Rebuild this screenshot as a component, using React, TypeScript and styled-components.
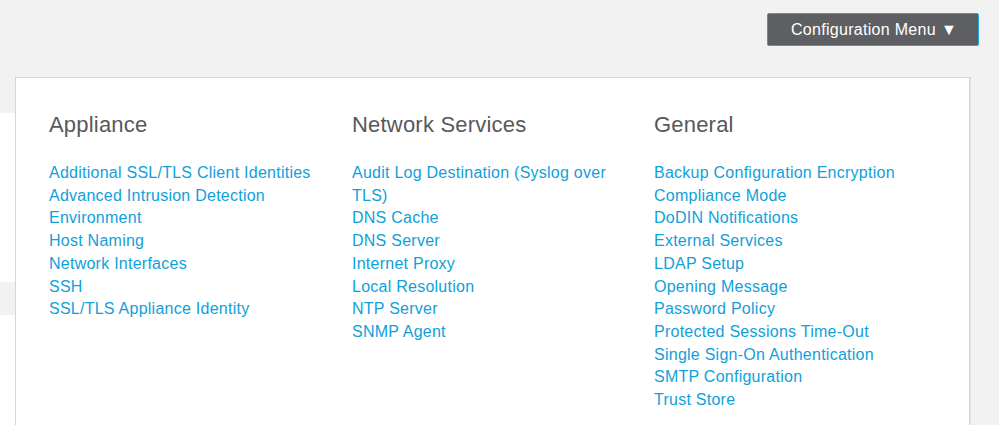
import styled, { createGlobalStyle } from "styled-components";

const GlobalStyle = createGlobalStyle`
    html, body {
        margin: 0;
        padding: 0;
        background: #f2f2f2;
        font-family: "Liberation Sans", Arial, Helvetica, sans-serif;
    }
    #root {
        min-height: 425px;
    }
`;

const Page = styled.div`
    position: relative;
    width: 999px;
    height: 425px;
    overflow: hidden;
    background: #f2f2f2;
`;

const Header = styled.div`
    height: 113px;
    display: flex;
    justify-content: flex-end;
    align-items: flex-start;
    padding: 13px 20px 0 0;
    box-sizing: border-box;
`;

const MenuButton = styled.button`
    height: 33px;
    width: 212px;
    background: #5e5f63;
    color: #ffffff;
    border: 1px solid #23a6e0;
    border-radius: 2px;
    font-family: inherit;
    font-size: 16px;
    letter-spacing: 0.3px;
    display: flex;
    align-items: center;
    justify-content: center;
    gap: 5px;
    padding: 0 0 0 2px;
    cursor: pointer;
`;

const Caret = styled.span`
    font-size: 16px;
    line-height: 1;
`;

const Content = styled.div`
    width: 960px;
    background: #ffffff;
    display: flex;
    flex-direction: column;
`;

const Row = styled.div<{ $shade?: boolean; $h: number }>`
    height: ${(p) => p.$h}px;
    background: ${(p) => (p.$shade ? "#f2f2f2" : "#ffffff")};
`;

const Dropdown = styled.div`
    position: absolute;
    top: 77px;
    left: 15px;
    width: 955px;
    height: 380px;
    background: #ffffff;
    border: 1px solid #d6d6d8;
    box-shadow: 1px 0 0 #e2e2e4;
    box-sizing: border-box;
    padding: 35px 0 0 33px;
    display: grid;
    grid-template-columns: 303px 302px 302px;
`;

const Column = styled.div`
    padding-right: 30px;
`;

const Heading = styled.h3`
    margin: 0 0 25px;
    font-size: 22px;
    letter-spacing: 0.2px;
    line-height: 24px;
    font-weight: 400;
    color: #58585b;
`;

const LinkList = styled.ul`
    list-style: none;
    margin: 0;
    padding: 0;
`;

const MenuLink = styled.a`
    display: block;
    font-size: 16px;
    letter-spacing: 0.25px;
    line-height: 22.7px;
    color: #10a0da;
    text-decoration: none;
    cursor: pointer;
`;

const columns = [
    {
        title: "Appliance",
        links: [
            "Additional SSL/TLS Client Identities",
            "Advanced Intrusion Detection",
            "Environment",
            "Host Naming",
            "Network Interfaces",
            "SSH",
            "SSL/TLS Appliance Identity",
        ],
    },
    {
        title: "Network Services",
        links: [
            "Audit Log Destination (Syslog over TLS)",
            "DNS Cache",
            "DNS Server",
            "Internet Proxy",
            "Local Resolution",
            "NTP Server",
            "SNMP Agent",
        ],
    },
    {
        title: "General",
        links: [
            "Backup Configuration Encryption",
            "Compliance Mode",
            "DoDIN Notifications",
            "External Services",
            "LDAP Setup",
            "Opening Message",
            "Password Policy",
            "Protected Sessions Time-Out",
            "Single Sign-On Authentication",
            "SMTP Configuration",
            "Trust Store",
        ],
    },
];

export default function App() {
    return (
        <Page>
            <GlobalStyle />
            <Header>
                <MenuButton>
                    Configuration Menu <Caret>▼</Caret>
                </MenuButton>
            </Header>
            <Content>
                <Row $h={169} />
                <Row $h={33} $shade />
                <Row $h={110} />
            </Content>
            <Dropdown>
                {columns.map((col) => (
                    <Column key={col.title}>
                        <Heading>{col.title}</Heading>
                        <LinkList>
                            {col.links.map((l) => (
                                <li key={l}>
                                    <MenuLink>{l}</MenuLink>
                                </li>
                            ))}
                        </LinkList>
                    </Column>
                ))}
            </Dropdown>
        </Page>
    );
}
